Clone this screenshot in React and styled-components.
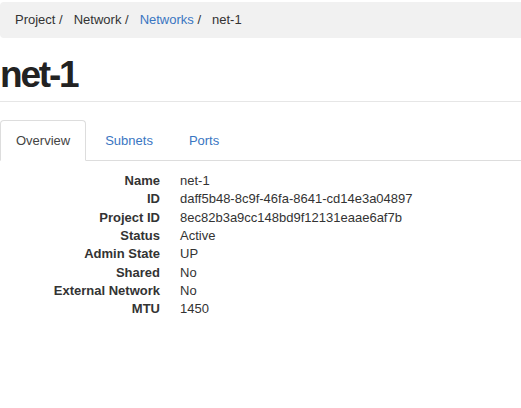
import styled, { createGlobalStyle } from "styled-components"

const Global = createGlobalStyle`
  body {
    margin: 0;
    background: #ffffff;
    font-family: "Liberation Sans", Arial, sans-serif;
    font-size: 13px;
    color: #333333;
  }
`

const Page = styled.div`
  display: flex;
  flex-direction: column;
  padding-top: 2px;
`

const Breadcrumb = styled.ol`
  display: flex;
  list-style: none;
  margin: 0;
  padding: 8px 15px;
  line-height: 20px;
  background: #f1f1f1;
  border-radius: 4px 0 0 4px;
`

const Crumb = styled.li`
  color: ${(p) => (p.$link ? "#3a76c2" : "#333333")};
  &:not(:last-child)::after {
    content: "\\00a0/";
    color: #333333;
    margin-right: 11px;
  }
`

const PageHeader = styled.div`
  margin-top: 16px;
  padding-bottom: 5px;
  border-bottom: 1px solid #e6e6e6;
`

const Title = styled.h1`
  margin: 0;
  font-size: 37px;
  line-height: 42px;
  font-weight: bold;
  letter-spacing: -2.2px;
  color: #222222;
`

const Tabs = styled.ul`
  display: flex;
  list-style: none;
  margin: 18px 0 0 0;
  padding: 0;
  border-bottom: 1px solid #dddddd;
`

const Tab = styled.li`
  margin-bottom: -1px;
  margin-right: ${(p) => (p.$active ? "3px" : "4px")};
  padding: 10px 15px;
  line-height: 19px;
  border: 1px solid ${(p) => (p.$active ? "#dddddd" : "transparent")};
  border-bottom-color: ${(p) => (p.$active ? "#ffffff" : "transparent")};
  border-radius: 4px 4px 0 0;
  background: ${(p) => (p.$active ? "#ffffff" : "transparent")};
  color: ${(p) => (p.$active ? "#444444" : "#3a76c2")};
`

const Details = styled.dl`
  display: grid;
  grid-template-columns: 160px 1fr;
  column-gap: 20px;
  margin: 11px 0 0 0;
  line-height: 18.35px;
`

const Label = styled.dt`
  font-weight: bold;
  text-align: right;
  white-space: nowrap;
  color: #333333;
`

const Value = styled.dd`
  margin: 0;
  color: #333333;
`

const rows = [
  ["Name", "net-1"],
  ["ID", "daff5b48-8c9f-46fa-8641-cd14e3a04897"],
  ["Project ID", "8ec82b3a9cc148bd9f12131eaae6af7b"],
  ["Status", "Active"],
  ["Admin State", "UP"],
  ["Shared", "No"],
  ["External Network", "No"],
  ["MTU", "1450"],
]

export default function App() {
  return (
    <>
      <Global />
      <Page>
        <Breadcrumb>
          <Crumb>Project</Crumb>
          <Crumb>Network</Crumb>
          <Crumb $link>Networks</Crumb>
          <Crumb>net-1</Crumb>
        </Breadcrumb>
        <PageHeader>
          <Title>net-1</Title>
        </PageHeader>
        <Tabs>
          <Tab $active>Overview</Tab>
          <Tab>Subnets</Tab>
          <Tab>Ports</Tab>
        </Tabs>
        <Details>
          {rows.map(([k, v]) => [
            <Label key={k}>{k}</Label>,
            <Value key={k + "v"}>{v}</Value>,
          ])}
        </Details>
      </Page>
    </>
  )
}
